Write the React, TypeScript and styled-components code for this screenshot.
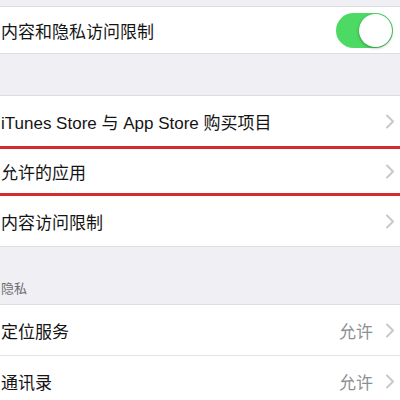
import styled, { createGlobalStyle } from "styled-components";

const GlobalStyle = createGlobalStyle`
  html, body {
    margin: 0;
    padding: 0;
    background: #efeff4;
  }
  body {
    font-family: "Liberation Sans", "Noto Sans CJK SC", sans-serif;
    -webkit-font-smoothing: antialiased;
  }
`;

const Page = styled.div`
  width: 400px;
  height: 400px;
  overflow: hidden;
  background: #efeff4;
  padding-top: 6px;
  box-sizing: border-box;
`;

const Group = styled.div<{ $gap?: number }>`
  background: #fff;
  border-top: 1px solid #dedee2;
  border-bottom: 1px solid #dedee2;
  margin-bottom: ${(p) => p.$gap ?? 0}px;
`;

const Row = styled.div<{ $h?: number; $highlight?: boolean; $divider?: boolean }>`
  display: flex;
  align-items: center;
  height: ${(p) => p.$h ?? 50}px;
  box-sizing: border-box;
  padding: 0 5px 0 1px;
  border-top: ${(p) =>
    p.$highlight ? "3px solid #d62a2e" : p.$divider ? "1px solid #e2e2e6" : "none"};
  border-bottom: ${(p) => (p.$highlight ? "3px solid #d62a2e" : "none")};
`;

const Label = styled.span`
  flex: 1;
  font-size: 17px;
  color: #141414;
  white-space: nowrap;
`;

const Detail = styled.span`
  font-size: 17px;
  color: #8e8e93;
  margin-right: 12px;
`;

const SectionHeader = styled.div`
  height: 57px;
  display: flex;
  align-items: flex-end;
  padding: 0 0 7px 1px;
  box-sizing: border-box;
  font-size: 13px;
  color: #6d6d72;
`;

const Toggle = styled.div`
  position: relative;
  width: 57px;
  height: 35px;
  border-radius: 18px;
  background: #4cd964;
  margin-right: 2px;
`;

const Knob = styled.div`
  position: absolute;
  top: 1px;
  right: 1px;
  width: 33px;
  height: 33px;
  border-radius: 50%;
  background: #fff;
  box-shadow: 0 1px 3px rgba(0, 0, 0, 0.35);
`;

function Chevron() {
  return (
    <svg width="10" height="15" viewBox="0 0 10 15">
      <path d="M2 1.5 L8 7.5 L2 13.5" fill="none" stroke="#c7c7cc" strokeWidth="2" strokeLinecap="round" strokeLinejoin="round" />
    </svg>
  );
}

export default function App() {
  return (
    <>
      <GlobalStyle />
      <Page>
        <Group $gap={41}>
          <Row $h={46}>
            <Label>内容和隐私访问限制</Label>
            <Toggle>
              <Knob />
            </Toggle>
          </Row>
        </Group>
        <Group>
          <Row>
            <Label>iTunes Store 与 App Store 购买项目</Label>
            <Chevron />
          </Row>
          <Row $highlight>
            <Label>允许的应用</Label>
            <Chevron />
          </Row>
          <Row>
            <Label>内容访问限制</Label>
            <Chevron />
          </Row>
        </Group>
        <SectionHeader>隐私</SectionHeader>
        <Group>
          <Row>
            <Label>定位服务</Label>
            <Detail>允许</Detail>
            <Chevron />
          </Row>
          <Row $divider $h={51}>
            <Label>通讯录</Label>
            <Detail>允许</Detail>
            <Chevron />
          </Row>
        </Group>
      </Page>
    </>
  );
}
